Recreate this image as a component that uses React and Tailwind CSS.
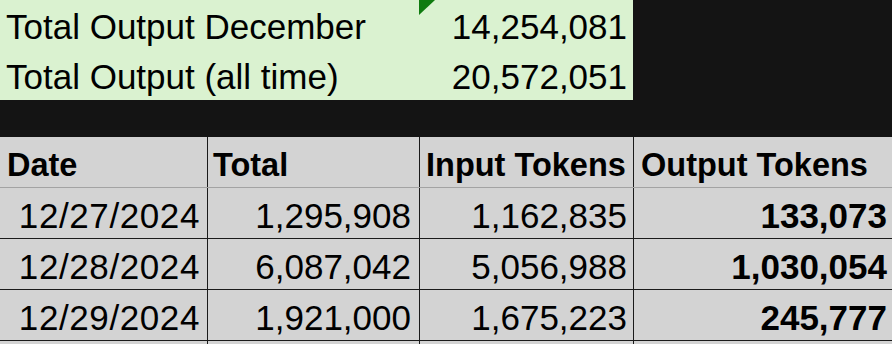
const summary = [
  { label: "Total Output December", value: "14,254,081", flag: true },
  { label: "Total Output (all time)", value: "20,572,051" },
];

const rows = [
  ["12/27/2024", "1,295,908", "1,162,835", "133,073"],
  ["12/28/2024", "6,087,042", "5,056,988", "1,030,054"],
  ["12/29/2024", "1,921,000", "1,675,223", "245,777"],
];

const cols = [
  "w-[208px] pr-[7px] tracking-[0.6px]",
  "w-[212px] pr-[8px]",
  "w-[214px] pr-[6px]",
  "flex-1 pr-[5px]",
];
const heads = [
  ["Date", "w-[208px] pl-[7px]"],
  ["Total", "w-[212px] pl-[5px]"],
  ["Input Tokens", "w-[214px] pl-[6px]"],
  ["Output Tokens", "flex-1 pl-[7px]"],
];

export default function App() {
  return (
    <div className="w-[892px] h-[344px] overflow-hidden bg-[#141414] text-black font-['Liberation_Sans',Arial,sans-serif]">
      {/* summary block */}
      <div className="w-[633px] h-[100px] bg-[#daf2d0] flex flex-col">
        {summary.map((s) => (
          <div key={s.label} className="h-[50px] flex items-end">
            <div className="w-[419px] pl-[6px] pb-[3px] text-[35px] leading-[40px] whitespace-nowrap">
              {s.label}
            </div>
            <div className="relative flex-1 h-full flex items-end justify-end pr-[6px] pb-[3px] text-[35px] leading-[40px]">
              {s.flag && (
                <svg className="absolute left-0 top-0" width="16" height="16" viewBox="0 0 16 16">
                  <polygon points="0,0 16,0 0,15" fill="#0f7b0f" />
                </svg>
              )}
              {s.value}
            </div>
          </div>
        ))}
      </div>

      <div className="h-[37px]" />

      {/* table */}
      <div className="bg-[#d3d3d3] h-[207px]">
        <div className="flex h-[51px] border-b border-[#a3a3a3]">
          {heads.map(([h, cls], i) => (
            <div
              key={h}
              className={`${cls} flex items-end pb-[2px] text-[32.5px] leading-[40px] font-bold whitespace-nowrap ${
                i < 3 ? "border-r border-[#1a1a1a]" : ""
              }`}
            >
              {h}
            </div>
          ))}
        </div>
        {rows.map((r) => (
          <div key={r[0]} className="flex h-[51px] border-b border-[#1a1a1a]">
            {r.map((v, i) => (
              <div
                key={i}
                className={`${cols[i]} flex items-end justify-end pb-[2px] text-[35px] leading-[40px] whitespace-nowrap ${
                  i < 3 ? "border-r border-[#1a1a1a]" : "font-bold"
                }`}
              >
                {v}
              </div>
            ))}
          </div>
        ))}
        <div className="flex h-[3px]">
          <div className="w-[208px] border-r border-[#1a1a1a]" />
          <div className="w-[212px] border-r border-[#1a1a1a]" />
          <div className="w-[214px] border-r border-[#1a1a1a]" />
        </div>
      </div>
    </div>
  );
}
